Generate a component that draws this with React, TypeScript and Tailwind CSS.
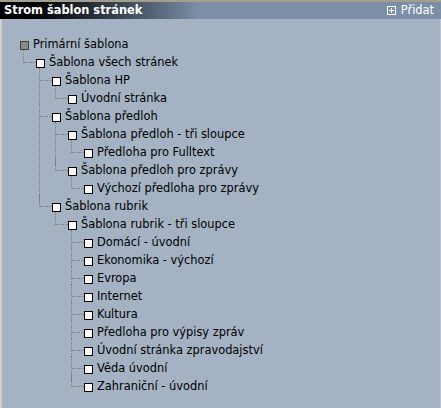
import React from "react";

type Node = { label: string; children?: Node[]; root?: boolean };

const tree: Node = {
  label: "Primární šablona",
  root: true,
  children: [
    {
      label: "Šablona všech stránek",
      children: [
        { label: "Šablona HP", children: [{ label: "Úvodní stránka" }] },
        {
          label: "Šablona předloh",
          children: [
            { label: "Šablona předloh - tři sloupce", children: [{ label: "Předloha pro Fulltext" }] },
            { label: "Šablona předloh pro zprávy", children: [{ label: "Výchozí předloha pro zprávy" }] },
          ],
        },
        {
          label: "Šablona rubrik",
          children: [
            {
              label: "Šablona rubrik - tři sloupce",
              children: [
                { label: "Domácí - úvodní" },
                { label: "Ekonomika - výchozí" },
                { label: "Evropa" },
                { label: "Internet" },
                { label: "Kultura" },
                { label: "Předloha pro výpisy zpráv" },
                { label: "Úvodní stránka zpravodajství" },
                { label: "Věda úvodní" },
                { label: "Zahraniční - úvodní" },
              ],
            },
          ],
        },
      ],
    },
  ],
};

function TreeNode({ node, isChild, isLast }: { node: Node; isChild: boolean; isLast: boolean }) {
  return (
    <div className="relative">
      {isChild && (
        <>
          <span
            className={
              isLast
                ? "absolute left-[-13px] top-[-4px] h-[13px] border-l border-dotted border-[#808080]"
                : "absolute left-[-13px] top-[-4px] bottom-[-4px] border-l border-dotted border-[#808080]"
            }
          />
          <span className="absolute left-[-12px] top-[8px] w-[12px] border-t border-dotted border-[#808080]" />
        </>
      )}
      <div className="flex h-[18px] items-center">
        <span
          className={
            node.root
              ? "h-[9px] w-[9px] shrink-0 border border-[#404040] bg-[#8a8a8a]"
              : "h-[9px] w-[9px] shrink-0 border border-black bg-white"
          }
        />
        <span className="ml-[4px] whitespace-nowrap text-[11.4px] leading-none text-black">{node.label}</span>
      </div>
      {node.children && (
        <div className="ml-[16px]">
          {node.children.map((c, i) => (
            <TreeNode key={c.label} node={c} isChild isLast={i === node.children!.length - 1} />
          ))}
        </div>
      )}
    </div>
  );
}

export default function App() {
  return (
    <div
      className="flex h-[408px] w-[441px] flex-col overflow-hidden bg-[#a4b2c3]"
      style={{ fontFamily: "'DejaVu Sans', Verdana, sans-serif" }}
    >
      <div className="h-[2px] bg-[#a49e8f]" />
      <div className="flex h-[17px] items-center justify-between bg-gradient-to-r from-black from-0% via-[#7b8fa7] via-45% to-[#7b8fa7] pl-[4px] pr-[7px] text-white">
        <span className="text-[11.4px] font-bold leading-none">Strom šablon stránek</span>
        <span className="flex items-center gap-[5px] text-[11.4px] leading-none">
          <svg width="9" height="9" viewBox="0 0 9 9" className="shrink-0">
            <rect x="0.5" y="0.5" width="8" height="8" fill="none" stroke="white" />
            <path d="M2 4.5h5M4.5 2v5" stroke="white" />
          </svg>
          Přidat
        </span>
      </div>
      <div className="flex flex-1">
        <div className="w-[2px] bg-[#d4d0c6]" />
        <div className="flex-1 pl-[18px] pt-[17px]">
          <TreeNode node={tree} isChild={false} isLast />
        </div>
        <div className="w-[1px] bg-[#b8c4d2]" />
      </div>
    </div>
  );
}
